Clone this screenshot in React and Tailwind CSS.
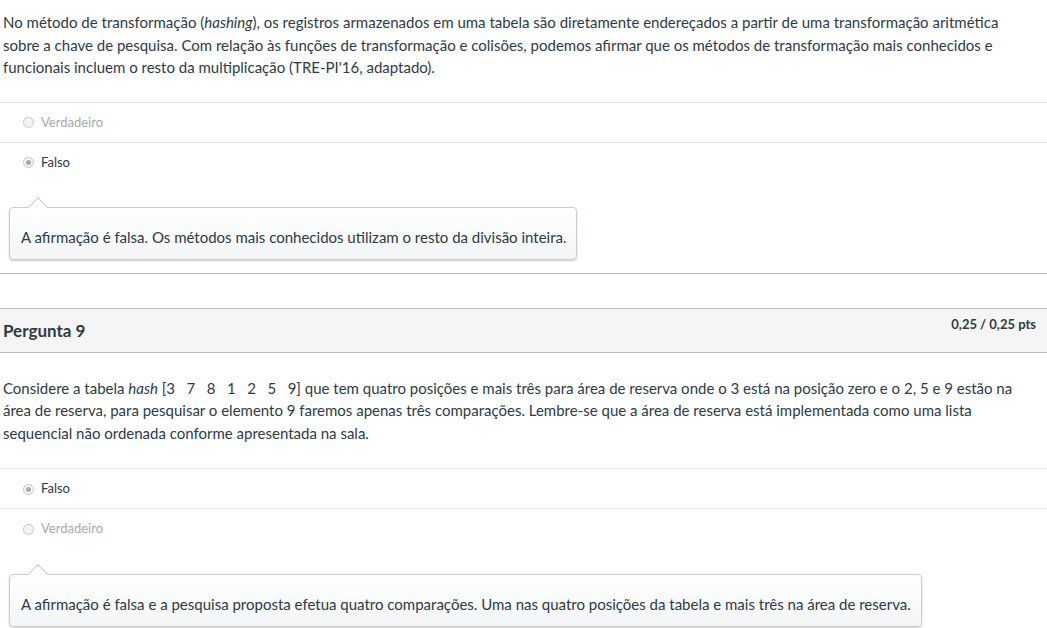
const Radio = ({ checked }) => (
  <span className="inline-flex items-center justify-center w-[11px] h-[11px] rounded-full border border-[#c8c8c8] bg-[#f4f4f4]">
    {checked && <span className="w-[5px] h-[5px] rounded-full bg-[#a8a8a8]" />}
  </span>
);

const Answer = ({ label, selected }) => (
  <div className="flex items-center h-[40px] border-t border-[#e6e6e6] pl-[23px] pt-[1px] text-[13px]">
    <Radio checked={selected} />
    <span className={`ml-[7px] ${selected ? "text-[#2d3b45]" : "text-[#a5a9ac]"}`}>{label}</span>
  </div>
);

const Comment = ({ children, width }) => (
  <div className="relative ml-[9px]" style={{ width }}>
    <div className="absolute left-[22px] -top-[7px] w-[14px] h-[14px] rotate-45 bg-white border-l border-t border-[#c7cdd1]" />
    <div className="rounded-[4px] border border-[#c7cdd1] bg-gradient-to-b from-white to-[#f3f5f6] shadow-[0_1px_2px_rgba(0,0,0,0.2)] pl-[11px] pt-[18px] pb-[11px] text-[15px] leading-[22px] text-[#2d3b45]">
      {children}
    </div>
  </div>
);

export default function App() {
  return (
    <div className="min-h-screen bg-white text-[15px] text-[#2d3b45] font-['Lato','Noto_Sans',sans-serif]">
      {/* Pergunta 8 (resto) */}
      <div className="border-b border-[#b5b9bc] pb-[13px]">
        <p className="pl-[3px] pr-[20px] pt-[11px] leading-[22.5px]">
          No método de transformação (<em>hashing</em>), os registros armazenados em uma tabela são diretamente endereçados a partir de uma transformação aritmética sobre a chave de pesquisa. Com relação às funções de transformação e colisões, podemos afirmar que os métodos de transformação mais conhecidos e funcionais incluem o resto da multiplicação (TRE-PI'16, adaptado).
        </p>
        <div className="mt-[23px]">
          <Answer label="Verdadeiro" />
          <Answer label="Falso" selected />
        </div>
        <div className="mt-[25px]">
          <Comment width={568}>A afirmação é falsa. Os métodos mais conhecidos utilizam o resto da divisão inteira.</Comment>
        </div>
      </div>

      {/* Pergunta 9 */}
      <div className="mt-[34px]">
        <div className="flex justify-between items-start h-[45px] bg-[#f5f5f5] border-t border-b border-[#b5b9bc]">
          <h2 className="pl-[3px] pt-[11px] text-[17px] font-bold leading-[22px]">Pergunta 9</h2>
          <span className="pr-[11px] pt-[7px] text-[13px] font-bold leading-[16px]">0,25 / 0,25 pts</span>
        </div>
        <p className="pl-[3px] pr-[20px] pt-[24px] leading-[22.5px]">
          Considere a tabela <em>hash</em> [3&nbsp;&nbsp; 7&nbsp;&nbsp; 8&nbsp;&nbsp; 1&nbsp;&nbsp; 2&nbsp;&nbsp; 5&nbsp;&nbsp; 9] que tem quatro posições e mais três para área de reserva onde o 3 está na posição zero e o 2, 5 e 9 estão na área de reserva, para pesquisar o elemento 9 faremos apenas três comparações. Lembre-se que a área de reserva está implementada como uma lista sequencial não ordenada conforme apresentada na sala.
        </p>
        <div className="mt-[24px]">
          <Answer label="Falso" selected />
          <Answer label="Verdadeiro" />
        </div>
        <div className="mt-[26px]">
          <Comment width={913}>A afirmação é falsa e a pesquisa proposta efetua quatro comparações. Uma nas quatro posições da tabela e mais três na área de reserva.</Comment>
        </div>
      </div>
    </div>
  );
}
